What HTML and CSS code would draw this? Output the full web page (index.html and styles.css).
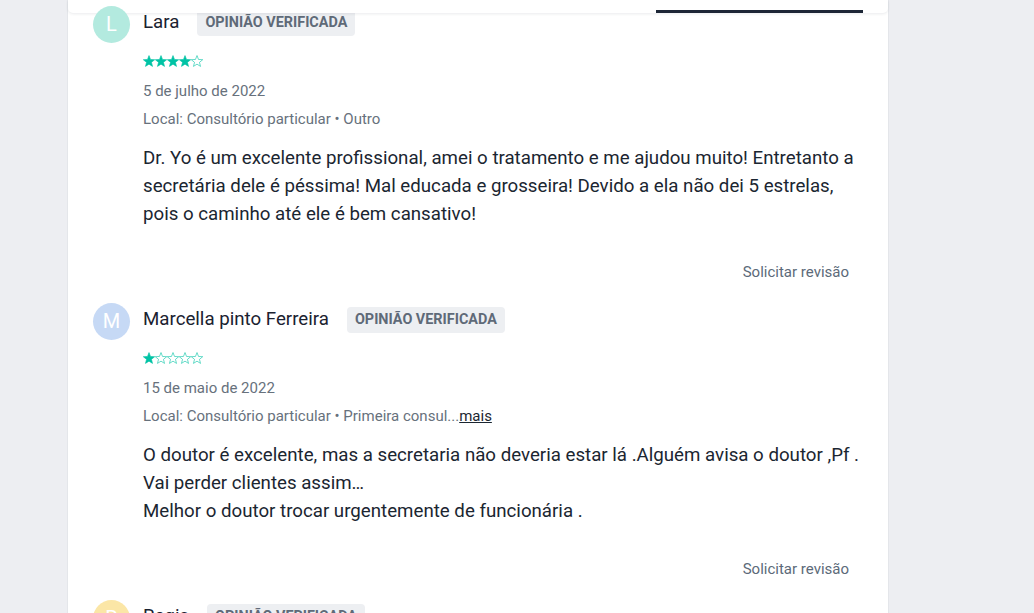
FILE: index.html
```html
<!DOCTYPE html>
<html lang="pt">
<head>
<meta charset="utf-8">
<title>Opiniões</title>
<link rel="stylesheet" href="styles.css">
</head>
<body>
<div class="page">
  <div class="tabs-bar"><span class="tab-indicator"></span></div>
  <section class="card">
    <article class="review">
      <div class="avatar avatar-teal">L</div>
      <div class="review-body">
        <div class="review-head">
          <span class="name">Lara</span>
          <span class="badge">OPINIÃO VERIFICADA</span>
        </div>
        <div class="stars">
          <svg class="star full" viewBox="0 0 24 23"><path d="M12 .6L15.06 8.39 23.41 8.89 16.95 14.21 19.05 22.31 12 17.8 4.95 22.31 7.05 14.21 .59 8.89 8.94 8.39Z"/></svg>
          <svg class="star full" viewBox="0 0 24 23"><path d="M12 .6L15.06 8.39 23.41 8.89 16.95 14.21 19.05 22.31 12 17.8 4.95 22.31 7.05 14.21 .59 8.89 8.94 8.39Z"/></svg>
          <svg class="star full" viewBox="0 0 24 23"><path d="M12 .6L15.06 8.39 23.41 8.89 16.95 14.21 19.05 22.31 12 17.8 4.95 22.31 7.05 14.21 .59 8.89 8.94 8.39Z"/></svg>
          <svg class="star full" viewBox="0 0 24 23"><path d="M12 .6L15.06 8.39 23.41 8.89 16.95 14.21 19.05 22.31 12 17.8 4.95 22.31 7.05 14.21 .59 8.89 8.94 8.39Z"/></svg>
          <svg class="star empty" viewBox="0 0 24 23"><path d="M12 .6L15.06 8.39 23.41 8.89 16.95 14.21 19.05 22.31 12 17.8 4.95 22.31 7.05 14.21 .59 8.89 8.94 8.39Z"/></svg>
        </div>
        <div class="meta date">5 de julho de 2022</div>
        <div class="meta place">Local: Consultório particular • Outro</div>
        <p class="text">Dr. Yo é um excelente profissional, amei o tratamento e me ajudou muito! Entretanto a secretária dele é péssima! Mal educada e grosseira! Devido a ela não dei 5 estrelas, pois o caminho até ele é bem cansativo!</p>
        <div class="actions"><button class="link-btn" type="button">Solicitar revisão</button></div>
      </div>
    </article>

    <article class="review">
      <div class="avatar avatar-blue">M</div>
      <div class="review-body">
        <div class="review-head">
          <span class="name">Marcella pinto Ferreira</span>
          <span class="badge">OPINIÃO VERIFICADA</span>
        </div>
        <div class="stars">
          <svg class="star full" viewBox="0 0 24 23"><path d="M12 .6L15.06 8.39 23.41 8.89 16.95 14.21 19.05 22.31 12 17.8 4.95 22.31 7.05 14.21 .59 8.89 8.94 8.39Z"/></svg>
          <svg class="star empty" viewBox="0 0 24 23"><path d="M12 .6L15.06 8.39 23.41 8.89 16.95 14.21 19.05 22.31 12 17.8 4.95 22.31 7.05 14.21 .59 8.89 8.94 8.39Z"/></svg>
          <svg class="star empty" viewBox="0 0 24 23"><path d="M12 .6L15.06 8.39 23.41 8.89 16.95 14.21 19.05 22.31 12 17.8 4.95 22.31 7.05 14.21 .59 8.89 8.94 8.39Z"/></svg>
          <svg class="star empty" viewBox="0 0 24 23"><path d="M12 .6L15.06 8.39 23.41 8.89 16.95 14.21 19.05 22.31 12 17.8 4.95 22.31 7.05 14.21 .59 8.89 8.94 8.39Z"/></svg>
          <svg class="star empty" viewBox="0 0 24 23"><path d="M12 .6L15.06 8.39 23.41 8.89 16.95 14.21 19.05 22.31 12 17.8 4.95 22.31 7.05 14.21 .59 8.89 8.94 8.39Z"/></svg>
        </div>
        <div class="meta date">15 de maio de 2022</div>
        <div class="meta place">Local: Consultório particular • Primeira consul...<a class="more" href="#">mais</a></div>
        <p class="text">O doutor é excelente, mas a secretaria não deveria estar lá .Alguém avisa o doutor ,Pf .<br>Vai perder clientes assim…<br>Melhor o doutor trocar urgentemente de funcionária .</p>
        <div class="actions"><button class="link-btn" type="button">Solicitar revisão</button></div>
      </div>
    </article>

    <article class="review">
      <div class="avatar avatar-yellow">R</div>
      <div class="review-body">
        <div class="review-head">
          <span class="name">Regis</span>
          <span class="badge">OPINIÃO VERIFICADA</span>
        </div>
      </div>
    </article>
  </section>
</div>
</body>
</html>
```

FILE: styles.css
```css
* { box-sizing: border-box; }

html, body {
  margin: 0;
  padding: 0;
  height: 100%;
  overflow: hidden;
}

body {
  background: #edeef2;
  font-family: Roboto, "Liberation Sans", Arial, sans-serif;
  color: #1b2631;
}

.page {
  position: relative;
  width: 820px;
  margin-left: 68px;
}

.tabs-bar {
  position: absolute;
  top: 0;
  left: 0;
  right: 0;
  height: 13px;
  background: #fff;
  border-radius: 0 0 5px 5px;
  box-shadow: 0 1px 3px rgba(20, 30, 50, 0.09);
  z-index: 1;
}

.tab-indicator {
  position: absolute;
  left: 588px;
  width: 207px;
  bottom: 0;
  height: 3px;
  background: #1d2636;
}

.card {
  background: #fff;
  min-height: 640px;
  padding: 8px 25px 0 25px;
  box-shadow: 0 0 0 1px #e4e6ea;
}

.review {
  display: grid;
  grid-template-columns: 37px 1fr;
  column-gap: 13px;
  margin-bottom: 15px;
}

.avatar {
  position: relative;
  z-index: 2;
  width: 37px;
  height: 37px;
  border-radius: 50%;
  margin-top: -2px;
  color: #fff;
  font-size: 20px;
  line-height: 37px;
  text-align: center;
}

.avatar-teal { background: #b3eadf; }
.avatar-blue { background: #c6d9f5; }
.avatar-yellow { background: #fbe6a6; }

.review-body {
  min-width: 0;
}

.review-head {
  display: flex;
  align-items: center;
  height: 28px;
}

.name {
  font-size: 18.7px;
  line-height: 24px;
  color: #1b2230;
}

.badge {
  margin-left: 18px;
  margin-top: 2px;
  padding: 4px 8px;
  background: #edeff2;
  border-radius: 4px;
  color: #5f6a78;
  font-size: 14.4px;
  font-weight: 700;
  line-height: 18px;
}

.stars {
  display: flex;
  margin-top: 19px;
  height: 12px;
}

.star {
  width: 12px;
  height: 12px;
  display: block;
}

.star path {
  stroke: #00c3a5;
  stroke-width: 1.2;
  stroke-linejoin: round;
}

.star.full path { fill: #00c3a5; }
.star.empty path { fill: none; }

.meta {
  font-size: 15px;
  line-height: 20px;
  color: #67717c;
}

.date { margin-top: 14px; }
.place { margin-top: 8px; }

.more {
  color: #1b2631;
  text-decoration: underline;
}

.text {
  margin: 15px 0 0;
  font-size: 18.7px;
  line-height: 28px;
  color: #1b2631;
}

.actions {
  display: flex;
  justify-content: flex-end;
  margin-top: 26px;
}

.link-btn {
  font-family: inherit;
  font-size: 15px;
  line-height: 20px;
  color: #5c6a79;
  background: none;
  border: 0;
  padding: 8px 14px;
  cursor: pointer;
}
```
